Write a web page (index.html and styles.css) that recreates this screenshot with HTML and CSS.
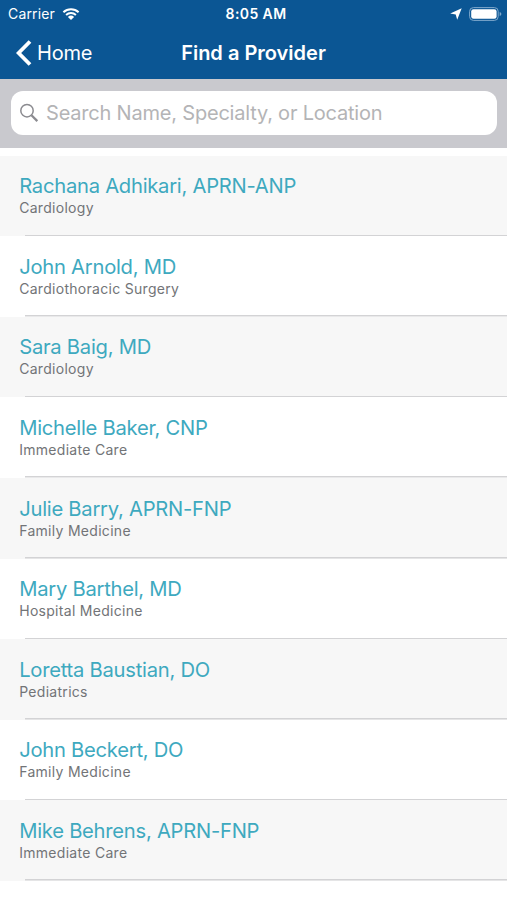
FILE: index.html
```html
<!DOCTYPE html>
<html lang="en">
<head>
  <meta charset="UTF-8">
  <meta name="viewport" content="width=device-width, initial-scale=1">
  <title>Find a Provider</title>
  <link rel="stylesheet" href="styles.css">
</head>
<body>
  <header class="header">
    <div class="status-bar">
      <div class="status-left">
        <span class="carrier">Carrier</span>
        <svg class="wifi" width="18" height="14" viewBox="0 0 18 14">
          <path d="M1.4 5.2a11 11 0 0 1 15.2 0M4.1 8a7.2 7.2 0 0 1 9.8 0" fill="none" stroke="#fff" stroke-width="2"/>
          <path d="M9 13 5.9 9.9a4.5 4.5 0 0 1 6.2 0z" fill="#fff"/>
        </svg>
      </div>
      <span class="clock">8:05 AM</span>
      <div class="status-right">
        <svg width="12" height="12" viewBox="0 0 12 12"><path d="M11.7.2 7.2 11.7 5.7 6.5.2 5.6z" fill="#fff"/></svg>
        <svg width="33" height="14" viewBox="0 0 33 14">
          <rect x=".6" y=".6" width="28.6" height="12.8" rx="3.8" fill="none" stroke="#7fa8cc" stroke-width="1"/>
          <rect x="2.2" y="2.2" width="25.4" height="9.6" rx="2.3" fill="#fff"/>
          <path d="M30.7 5v4q1.7-.6 1.7-2t-1.7-2z" fill="#7fa8cc"/>
        </svg>
      </div>
    </div>
    <nav class="nav-bar">
      <a class="back" href="#">
        <svg width="16" height="26" viewBox="0 0 16 26"><path d="M14 1.5 2.6 13 14 24.5" fill="none" stroke="#fff" stroke-width="3.8"/></svg>
        <span>Home</span>
      </a>
      <h1 class="title">Find a Provider</h1>
      <span></span>
    </nav>
  </header>

  <div class="search-bar">
    <label class="search-field">
      <svg width="20" height="20" viewBox="0 0 20 20"><g fill="none" stroke="#8b8b90"><circle cx="7" cy="7.7" r="6.2" stroke-width="1.5"/><path d="m11.5 12.3 5.8 5.8" stroke-width="2.3"/></g></svg>
      <input type="text" placeholder="Search Name, Specialty, or Location">
    </label>
  </div>

  <ul class="providers">
    <li class="provider"><span class="name">Rachana Adhikari, APRN-ANP</span><span class="specialty">Cardiology</span></li>
    <li class="provider"><span class="name">John Arnold, MD</span><span class="specialty">Cardiothoracic Surgery</span></li>
    <li class="provider"><span class="name">Sara Baig, MD</span><span class="specialty">Cardiology</span></li>
    <li class="provider"><span class="name">Michelle Baker, CNP</span><span class="specialty">Immediate Care</span></li>
    <li class="provider"><span class="name">Julie Barry, APRN-FNP</span><span class="specialty">Family Medicine</span></li>
    <li class="provider"><span class="name">Mary Barthel, MD</span><span class="specialty">Hospital Medicine</span></li>
    <li class="provider"><span class="name">Loretta Baustian, DO</span><span class="specialty">Pediatrics</span></li>
    <li class="provider"><span class="name">John Beckert, DO</span><span class="specialty">Family Medicine</span></li>
    <li class="provider"><span class="name">Mike Behrens, APRN-FNP</span><span class="specialty">Immediate Care</span></li>
  </ul>
</body>
</html>
```
FILE: styles.css
```css
* {
  box-sizing: border-box;
}

body {
  margin: 0;
  height: 900px;
  overflow: hidden;
  background: #fff;
  font-family: Inter, "Liberation Sans", sans-serif;
}

.header {
  height: 79px;
  background: #0b5694;
  color: #fff;
}

.status-bar,
.nav-bar {
  display: grid;
  grid-template-columns: 1fr auto 1fr;
  align-items: center;
}

.status-bar {
  height: 27px;
  padding: 0 5px 0 8px;
  font-size: 14px;
  line-height: 28px;
}

.status-left {
  display: flex;
  align-items: center;
  gap: 7px;
}

.carrier {
  letter-spacing: 0.15px;
}

.clock {
  padding-left: 2px;
  font-weight: 600;
  font-size: 14px;
  letter-spacing: 0.4px;
}

.status-right {
  display: flex;
  align-items: center;
  justify-content: flex-end;
  gap: 7px;
}

.nav-bar {
  height: 52px;
  padding: 0 16px;
}

.back {
  display: flex;
  align-items: center;
  gap: 5px;
  color: #fff;
  font-size: 20px;
  letter-spacing: -0.2px;
  text-decoration: none;
}

.title {
  margin: 0;
  font-size: 20px;
  font-weight: 600;
}

.search-bar {
  height: 69px;
  padding: 12px 10px 0 11px;
  background: #c9c9ce;
}

.search-field {
  display: flex;
  align-items: center;
  gap: 6px;
  height: 44px;
  padding: 0 9px;
  border-radius: 12px;
  background: #fff;
}

.search-field input {
  flex: 1;
  padding: 0;
  border: none;
  outline: none;
  font-family: inherit;
  font-size: 20px;
  letter-spacing: -0.2px;
}

.search-field input::placeholder {
  color: #b4b4b6;
}

.providers {
  margin: 7.6px 0 0;
  padding: 0;
  list-style: none;
}

.provider {
  display: flex;
  flex-direction: column;
  height: 80.6px;
  padding: 17.7px 0 0 19.2px;
  background: linear-gradient(#d3d3d5, #d3d3d5) 25px 100% / 100% 1.5px no-repeat;
}

.provider:nth-child(odd) {
  background-color: #f7f7f7;
}

.name {
  color: #3ea9bf;
  font-size: 20.2px;
  line-height: 26px;
  letter-spacing: -0.25px;
}

.specialty {
  color: #727477;
  font-size: 14px;
  line-height: 18px;
  letter-spacing: 0.29px;
}
```
